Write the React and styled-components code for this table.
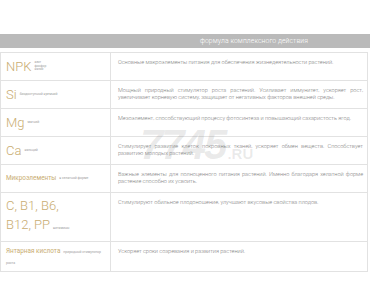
import React from 'react'
import styled, { createGlobalStyle } from 'styled-components'

const GlobalStyle = createGlobalStyle`
  body {
    margin: 0;
    background: #ffffff;
    font-family: Roboto, "Liberation Sans", sans-serif;
  }
`

const Page = styled.div`
  position: relative;
  width: 370px;
  padding-top: 34px;
`

const HeaderBand = styled.div`
  display: grid;
  grid-template-columns: 110px 1fr;
  height: 14px;
  background: #bababa;
`

const HeaderTitle = styled.div`
  grid-column: 2;
  display: flex;
  align-items: center;
  justify-content: center;
  padding-left: 28px;
  color: #ffffff;
  font-size: 6.8px;
  letter-spacing: 0.1px;
  font-weight: 300;
`

const Table = styled.div`
  margin-top: 4px;
  width: 366px;
  border: 1px solid #e2e2e2;
  border-bottom: none;
`

const Row = styled.div`
  display: grid;
  grid-template-columns: 110px 1fr;
  min-height: 27px;
  border-bottom: 1px solid #e2e2e2;
`

const LabelCell = styled.div`
  padding: 3px 5px;
  border-right: 1px solid #e2e2e2;
  color: #c9ad72;
  font-size: 13px;
  font-weight: 300;
  line-height: 19px;
  display: flex;
  align-items: center;
  flex-wrap: wrap;
`

const FlowLabel = styled.div`
  padding: 4px 5px 3px;
  border-right: 1px solid #e2e2e2;
  color: #c9ad72;
  font-size: 6.4px;
  line-height: 10px;
`

const Big = styled.span`
  font-size: 13px;
  font-weight: 300;
  line-height: 19px;
`

const Medium = styled.span`
  font-size: 6.4px;
  font-weight: 400;
`

const Note = styled.span`
  font-size: 3.4px;
  font-weight: 400;
  color: #a0a0a0;
  margin-left: 3px;
`

const NoteStack = styled.span`
  display: flex;
  flex-direction: column;
  margin-left: 3px;
  font-size: 3.2px;
  font-weight: 400;
  line-height: 3.8px;
  color: #a0a0a0;
`

const DescCell = styled.div`
  padding: 6px 4px 5px 7px;
  font-size: 5.6px;
  letter-spacing: -0.03px;
  line-height: 7px;
  font-weight: 300;
  color: #858585;
`

const Line = styled.div`
  white-space: nowrap;
  text-align: justify;
  text-align-last: ${p => (p.$last ? 'left' : 'justify')};
`

const Watermark = styled.div`
  position: absolute;
  left: 140px;
  top: 127px;
  display: flex;
  align-items: flex-end;
  font-family: "Liberation Sans", sans-serif;
  font-weight: 700;
  font-style: italic;
  color: rgba(90, 90, 90, 0.13);
  pointer-events: none;
`

const WatermarkNum = styled.span`
  font-size: 42px;
  line-height: 36px;
  letter-spacing: -2px;
`

const WatermarkDomain = styled.span`
  font-size: 15px;
  line-height: 19px;
  font-style: normal;
  margin-left: 2px;
`

const rows = [
  {
    label: (
      <>
        <Big>NPK</Big>
        <NoteStack>
          <span>азот</span>
          <span>фосфор</span>
          <span>калий</span>
        </NoteStack>
      </>
    ),
    lines: ['Основные макроэлементы питания для обеспечения жизнедеятельности растений.'],
  },
  {
    label: (
      <>
        <Big>Si</Big>
        <Note>биодоступный кремний</Note>
      </>
    ),
    lines: [
      'Мощный природный стимулятор роста растений. Усиливает иммунитет, ускоряет рост,',
      'увеличивает корневую систему, защищает от негативных факторов внешней среды.',
    ],
  },
  {
    label: (
      <>
        <Big>Mg</Big>
        <Note>магний</Note>
      </>
    ),
    lines: ['Мезоэлемент, способствующий процессу фотосинтеза и повышающий сахаристость ягод.'],
  },
  {
    label: (
      <>
        <Big>Ca</Big>
        <Note>кальций</Note>
      </>
    ),
    lines: [
      'Стимулирует развитие клеток покровных тканей, ускоряет обмен веществ. Способствует',
      'развитию молодых растений.',
    ],
  },
  {
    label: (
      <>
        <Medium>Микроэлементы</Medium>
        <Note>в хелатной форме</Note>
      </>
    ),
    lines: [
      'Важные элементы для полноценного питания растений. Именно благодаря хелатной форме',
      'растение способно их усвоить.',
    ],
  },
  {
    label: (
      <span>
        <Big>C, B1, B6,</Big>
        <br />
        <Big>B12, PP</Big>
        <Note>витамины</Note>
      </span>
    ),
    lines: ['Стимулируют обильное плодоношение, улучшают вкусовые свойства плодов.'],
  },
  {
    flow: true,
    label: (
      <>
        <Medium>Янтарная кислота</Medium>
        <Note>природный стимулятор роста</Note>
      </>
    ),
    lines: ['Ускоряет сроки созревания и развития растений.'],
  },
]

export default function App() {
  return (
    <>
      <GlobalStyle />
      <Page>
        <HeaderBand>
          <HeaderTitle>формула комплексного действия</HeaderTitle>
        </HeaderBand>
        <Table>
          {rows.map((r, i) => (
            <Row key={i}>
              {r.flow ? <FlowLabel>{r.label}</FlowLabel> : <LabelCell>{r.label}</LabelCell>}
              <DescCell>
                {r.lines.map((l, j) => (
                  <Line key={j} $last={j === r.lines.length - 1}>
                    {l}
                  </Line>
                ))}
              </DescCell>
            </Row>
          ))}
        </Table>
        <Watermark>
          <WatermarkNum>7745</WatermarkNum>
          <WatermarkDomain>.RU</WatermarkDomain>
        </Watermark>
      </Page>
    </>
  )
}
